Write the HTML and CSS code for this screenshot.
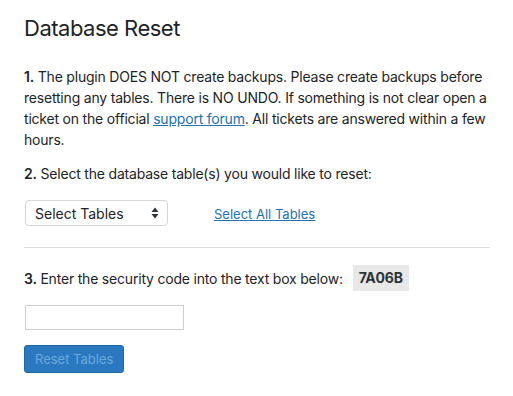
FILE: index.html
```html
<!DOCTYPE html>
<html lang="en">
<head>
    <meta charset="UTF-8">
    <title>Database Reset</title>
    <link rel="stylesheet" href="styles.css">
</head>
<body>
    <div class="wrap">
        <h1 class="title">Database Reset</h1>

        <p class="step first"><b>1.</b> The plugin DOES NOT create backups. Please create backups before resetting any tables. There is NO UNDO. If something is not clear open a ticket on the official <a href="#">support forum</a>. All tickets are answered within a few hours.</p>

        <p class="step"><b>2.</b> Select the database table(s) you would like to reset:</p>

        <div class="tables">
            <div class="select">
                <span>Select Tables</span>
                <svg class="arrows" width="8" height="12" viewBox="0 0 8 12">
                    <path d="M4 0.5 L7.5 5 L0.5 5 Z M4 11.5 L7.5 7 L0.5 7 Z" fill="#2c3338"/>
                </svg>
            </div>
            <a href="#" class="select-all">Select All Tables</a>
        </div>

        <hr class="divider">

        <p class="step code-line"><span><b>3.</b> Enter the security code into the text box below:</span><span class="code">7A06B</span></p>

        <div><input type="text" class="code-input"></div>

        <div class="actions">
            <div class="btn disabled">Reset Tables</div>
        </div>
    </div>
</body>
</html>
```

FILE: styles.css
```css
body {
    margin: 0;
    background-color: #ffffff;
    font-family: Inter, "Liberation Sans", sans-serif;
    color: #1d2327;
}
.wrap {
    padding: 0 23px 0 24px;
}
.title {
    font-size: 22px;
    font-weight: 400;
    line-height: 30px;
    margin: 13px 0 0;
    color: #1d2327;
    letter-spacing: -0.5px;
}
.step {
    font-size: 14px;
    line-height: 21px;
    margin: 13px 0 0;
    letter-spacing: -0.2px;
}
.step.first {
    margin-top: 23px;
}
.step b {
    font-weight: 600;
}
.step a {
    color: #2271b1;
}
.tables {
    display: flex;
    align-items: center;
    margin-top: 16px;
}
.select {
    width: 143px;
    height: 26px;
    box-sizing: border-box;
    border: 1px solid #d4d4d8;
    border-radius: 4px;
    display: flex;
    align-items: center;
    justify-content: space-between;
    padding: 0 8px 0 9px;
    font-size: 14px;
    color: #1d2327;
    margin-left: 1px;
}
.select-all {
    margin-left: 46px;
    margin-top: 2px;
    font-size: 13px;
    color: #2271b1;
}
.divider {
    border: 0;
    border-top: 1px solid #dcdcde;
    margin: 21px 0 0;
}
.code-line {
    display: flex;
    align-items: center;
    margin-top: 17px;
}
.code {
    background: #e8e8e8;
    font-weight: 700;
    padding: 0 6px;
    line-height: 26px;
    margin-left: 10px;
    color: #2c3338;
}
.code-input {
    width: 159px;
    height: 25px;
    box-sizing: border-box;
    border: 1px solid #d0d0d4;
    border-radius: 0;
    margin: 14px 0 0 1px;
    padding: 0;
    outline: none;
}
.actions {
    margin-top: 15px;
}
.btn {
    display: inline-block;
    height: 28px;
    line-height: 27px;
    box-sizing: border-box;
    padding: 0 10px;
    font-size: 13px;
    border-radius: 3px;
    background: #2271b1;
    border: 1px solid #2271b1;
    color: #ffffff;
    cursor: default;
    user-select: none;
}
.btn.disabled {
    color: #6fa8da;
    background: #2a78c0;
    border-color: #2069a8;
}
```
